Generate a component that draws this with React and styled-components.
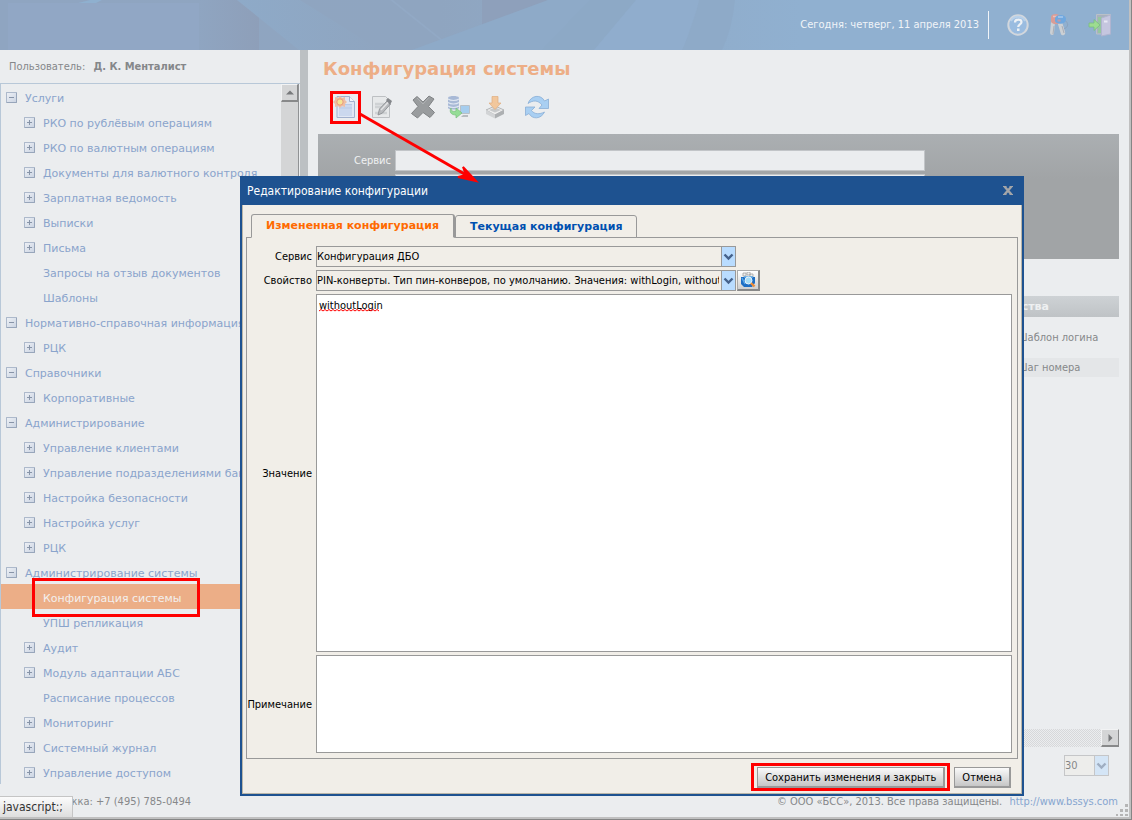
import React, { useState } from 'react';
import styled, { createGlobalStyle, css } from 'styled-components';

const GlobalStyle = createGlobalStyle`
    * {
        box-sizing: border-box;
    }

    html, body {
        margin: 0;
        padding: 0;
    }

    body, button, input, select, textarea {
        font-family: "DejaVu Sans Condensed", Tahoma, sans-serif;
        font-size: 11px;
    }

    svg {
        display: block;
    }
`;

const Page = styled.div`
    position: relative;
    display: flex;
    flex-direction: column;
    min-height: 100vh;
    padding: 0 2px 2px 0;
    background-color: #ebedef;
    border-right: 1px solid #858585;
    border-bottom: 1px solid #858585;
    box-shadow: inset -2px -2px 0 #c0c0c0;
    overflow: hidden;
`;

const Header = styled.header`
    position: relative;
    display: flex;
    align-items: center;
    justify-content: flex-end;
    height: 50px;
    padding-right: 17px;
    background-color: #90b0d0;
    color: #f1f4f8;
`;

const HeaderArt = styled.svg`
    position: absolute;
    top: 0;
    left: 0;
`;

const Today = styled.span`
    position: relative;
    padding-right: 9px;
    line-height: 28px;
    border-right: 1px solid #f1f4f8;
    margin-right: 17px;
`;

const HeaderLinks = styled.nav`
    display: flex;
    gap: 17px;
`;

const IconButton = styled.button`
    display: block;
    padding: 0;
    border: 0;
    background: none;
    cursor: pointer;
`;

const Body = styled.div`
    display: flex;
    flex: 1;
    min-height: 0;
`;

const Sidebar = styled.aside`
    display: flex;
    flex-direction: column;
    width: 300px;
    flex-shrink: 0;
`;

const User = styled.div`
    height: 33px;
    padding-left: 9px;
    line-height: 34px;
    color: #85878a;

    strong {
        margin-left: 5px;
    }
`;

const TreeArea = styled.div`
    display: flex;
    flex: 1;
    border-top: 1px solid #b8c8d8;
    border-left: 1px solid #b8c8d8;
`;

const Tree = styled.ul`
    flex: 1;
    min-width: 0;
    margin: 0;
    padding: 0;
    list-style: none;
    overflow: hidden;
`;

const TreeItem = styled.li`
    position: relative;
    display: flex;
    align-items: center;
    gap: 8px;
    height: 25px;
    padding-top: 2px;
    padding-left: ${({ $level }) => ($level ? 23 : 5)}px;
    background-color: ${({ $active }) => ($active ? '#ecae87' : 'transparent')};
`;

const TreeLink = styled.a`
    font-family: "DejaVu Sans", Verdana, sans-serif;
    line-height: 23px;
    white-space: nowrap;
    text-decoration: none;
    padding-top: 2px;
    color: ${({ $active }) => ($active ? '#f3f0ee' : '#8aa4cc')};
`;

const Toggle = styled.button`
    display: flex;
    align-items: center;
    justify-content: center;
    width: 11px;
    height: 11px;
    padding: 0;
    border: 1px solid #adb9cb;
    border-right-color: #97a5ba;
    border-bottom-color: #97a5ba;
    border-radius: 1px;
    background: linear-gradient(135deg, #edf0f5, #ccd5e3);
    visibility: ${({ $hidden }) => ($hidden ? 'hidden' : 'visible')};
`;

const Mark = styled.span`
    border: 3px solid #f00;
    position: absolute;
    z-index: 1;
    pointer-events: none;
`;

const TreeMark = styled(Mark)`
    top: -6px;
    bottom: -8px;
    left: 31px;
    width: 168px;
`;

const ScrollTrack = styled.div`
    width: 18px;
    border-right: 1px solid #909294;
    background-color: #d4d5d6;
    margin-right: 1px;
`;

const ScrollUp = styled.button`
    display: flex;
    align-items: center;
    justify-content: center;
    width: 17px;
    height: 18px;
    padding: 0;
    border: 1px solid #f2f3f4;
    border-right-color: #88898a;
    border-bottom: 2px solid #88898a;
    background-color: #d4d5d6;
`;

const Splitter = styled.div`
    width: 8px;
    flex-shrink: 0;
    background-color: #bcc0c3;
`;

const Main = styled.main`
    display: flex;
    flex: 1;
    flex-direction: column;
    min-width: 0;
    padding: 0 10px;
`;

const Title = styled.h1`
    margin: 0;
    padding: 6px 0 0 5px;
    font-family: "DejaVu Sans", Verdana, sans-serif;
    font-size: 18px;
    line-height: 25px;
    color: #edae86;
`;

const Toolbar = styled.div`
    display: flex;
    align-items: center;
    gap: 12px;
    height: 53px;
    padding: 0 0 2px 15px;
`;

const ToolButton = styled(IconButton)`
    position: relative;
    margin-right: ${({ $gap }) => ($gap ? 6 : 0)}px;
`;

const ToolMark = styled(Mark)`
    inset: -4px -4px -5px -3px;
`;

const Filter = styled.section`
    display: grid;
    grid-template-columns: 73px minmax(0, 530px);
    align-content: start;
    gap: 3px 4px;
    height: 125px;
    padding-top: 16px;
    background: linear-gradient(#abafb2, #a1a4a6 45px);
    color: #f0f1f2;
`;

const FilterLabel = styled.label`
    text-align: right;
    line-height: 21px;
`;

const FilterInput = styled.input`
    grid-column: 2;
    width: 100%;
    height: 21px;
    border: 1px solid #c2c5c8;
    background-color: #ebedef;
`;

const Grid = styled.div`
    display: flex;
    flex: 1;
    flex-direction: column;
    margin-top: 37px;
`;

const Table = styled.table`
    width: 100%;
    border-collapse: collapse;
    color: #86888a;

    th {
        height: 21px;
        padding: 0 70px 0 0;
        background: linear-gradient(#ced2d5, #bfc3c6);
        color: #eef0f1;
        font-family: "DejaVu Sans", Verdana, sans-serif;
        text-align: right;
    }

    td {
        padding: 0;
    }
`;

const Row = styled.tr`
    height: ${({ $shaded }) => ($shaded ? 19 : 41)}px;
    background-color: ${({ $shaded }) => ($shaded ? '#e4e6e8' : 'transparent')};
`;

const Cell = styled.span`
    display: block;
    width: 102px;
    margin-left: auto;
`;

const HorizontalScroll = styled.div`
    display: flex;
    justify-content: flex-end;
    height: 18px;
    margin-top: auto;
    background: repeating-conic-gradient(#d7d8da 0 25%, #ebedef 0 50%) 0 0 / 2px 2px;
`;

const ScrollRight = styled(ScrollUp)`
    width: 18px;
`;

const Pager = styled.div`
    display: flex;
    justify-content: flex-end;
    padding: 8px 10px;
`;

const Footer = styled.footer`
    display: flex;
    justify-content: space-between;
    height: 33px;
    padding: 0 11px 0 29px;
    line-height: 35px;
    color: #86888a;

    a {
        margin-left: 4px;
        text-decoration: none;
        color: #86a5d0;
    }
`;

const Status = styled.div`
    position: absolute;
    bottom: 2px;
    left: 0;
    width: 73px;
    height: 21px;
    padding-left: 3px;
    border-top: 1px solid #c5c5c5;
    border-right: 1px solid #c5c5c5;
    background: linear-gradient(#fcfcfc, #dedede);
    font-size: 12px;
    line-height: 21px;
    color: #333;
`;

const Grip = styled.svg`
    position: absolute;
    right: 3px;
    bottom: 3px;
`;

const Dialog = styled.section`
    position: absolute;
    top: 176px;
    right: 107px;
    bottom: 23px;
    left: 240px;
    display: flex;
    flex-direction: column;
    border: 2px solid #1e5290;
    background-color: #f1eee8;
`;

const DialogTitle = styled.header`
    display: flex;
    align-items: center;
    justify-content: space-between;
    height: 27px;
    padding: 0 9px 2px 5px;
    background-color: #1e5290;
    color: #fff;

    h2 {
        margin: 0;
        font-size: 12px;
        font-weight: normal;
    }
`;

const DialogBody = styled.div`
    display: flex;
    flex: 1;
    flex-direction: column;
    min-height: 0;
    padding: 9px 3px 5px;
    border: 1px solid #b9b5a8;
    border-top: 0;
`;

const Tabs = styled.div`
    display: flex;
    align-items: flex-end;
    height: 24px;
    margin: 0 0 -1px 5px;
`;

const Tab = styled.button`
    position: relative;
    height: ${({ $active }) => ($active ? 24 : 23)}px;
    padding: 0 14px;
    border: 1px solid #999;
    border-bottom-color: ${({ $active }) => ($active ? '#f1eee8' : '#999')};
    border-radius: 3px 3px 0 0;
    background-color: #f1eee8;
    font-family: "DejaVu Sans", Verdana, sans-serif;
    font-weight: bold;
    line-height: 20px;
    color: ${({ $active }) => ($active ? '#ff6a00' : '#0050b0')};
    ${({ $active }) => $active && css`
        border-right-width: 2px;
        z-index: 1;
    `}
`;

const Form = styled.form`
    display: grid;
    grid-template-columns: 65px minmax(0, 1fr);
    grid-template-rows: 21px 21px minmax(0, 1fr) 98px;
    gap: 3px 4px;
    flex: 1;
    min-height: 0;
    padding: 8px 5px 5px 0;
    border: 1px solid #999;

    label {
        align-self: center;
        text-align: right;
    }
`;

const Line = styled.div`
    display: flex;
    gap: 1px;
`;

const SelectBox = styled.div`
    position: relative;
    width: ${({ $small }) => ($small ? '45px' : '420px')};
    opacity: ${({ $small }) => ($small ? 0.45 : 1)};

    select {
        width: 100%;
        height: 21px;
        padding: 0 16px 0 0;
        appearance: none;
        border: 1px solid #999;
        border-radius: 0;
        background-color: #f1eee8;
        color: #000;
    }

    svg {
        position: absolute;
        top: 1px;
        right: 1px;
        pointer-events: none;
    }
`;

const Area = styled.textarea`
    display: block;
    width: 100%;
    height: 100%;
    padding: 4px 2px;
    border: 1px solid #999;
    border-radius: 0;
    outline: 0;
    resize: none;
    background-color: #fff;
    color: #000;
`;

const ValueBox = styled.div`
    position: relative;
`;

const Spelling = styled.svg`
    position: absolute;
    top: 15px;
    left: 3px;
`;

const Lookup = styled.button`
    display: flex;
    align-items: center;
    justify-content: center;
    width: 23px;
    height: 21px;
    padding: 0;
    border: 1px solid #aaa;
    border-right: 2px solid #888;
    border-bottom: 2px solid #888;
    background: linear-gradient(#fff, #cfcfcf);
`;

const Actions = styled.div`
    display: flex;
    justify-content: flex-end;
    gap: 9px;
    padding: 8px 7px 0 0;
`;

const ActionWrap = styled.div`
    position: relative;
`;

const ActionMark = styled(Mark)`
    inset: -4px -5px -3px -6px;
`;

const Action = styled.button`
    height: 21px;
    padding: 0 7px;
    border: 1px solid #999;
    border-right-width: 2px;
    border-bottom-width: 2px;
    background: linear-gradient(#fafafa, #c6c6c6);
    color: #000;
`;

const Arrow = styled.svg`
    position: absolute;
    top: 110px;
    left: 358px;
    pointer-events: none;
`;

const TREE = [
    ['Услуги', 0, '-'],
    ['РКО по рублёвым операциям', 1, '+'],
    ['РКО по валютным операциям', 1, '+'],
    ['Документы для валютного контроля', 1, '+'],
    ['Зарплатная ведомость', 1, '+'],
    ['Выписки', 1, '+'],
    ['Письма', 1, '+'],
    ['Запросы на отзыв документов', 1, ''],
    ['Шаблоны', 1, ''],
    ['Нормативно-справочная информация', 0, '-'],
    ['РЦК', 1, '+'],
    ['Справочники', 0, '-'],
    ['Корпоративные', 1, '+'],
    ['Администрирование', 0, '-'],
    ['Управление клиентами', 1, '+'],
    ['Управление подразделениями банка', 1, '+'],
    ['Настройка безопасности', 1, '+'],
    ['Настройка услуг', 1, '+'],
    ['РЦК', 1, '+'],
    ['Администрирование системы', 0, '-'],
    ['Конфигурация системы', 1, ''],
    ['УПШ репликация', 1, ''],
    ['Аудит', 1, '+'],
    ['Модуль адаптации АБС', 1, '+'],
    ['Расписание процессов', 1, ''],
    ['Мониторинг', 1, '+'],
    ['Системный журнал', 1, '+'],
    ['Управление доступом', 1, '+'],
];

const ACTIVE = 'Конфигурация системы';

const Chevron = () => (
    <svg width="14" height="19" viewBox="0 0 14 19">
        <rect width="14" height="19" fill="#b9dcff" />
        <path d="M0.5 0V19" stroke="#999" />
        <path d="M3.5 7.5L7.5 11.5L11.5 7.5" fill="none" stroke="#45628c" strokeWidth="2.4" />
    </svg>
);

const HelpIcon = () => (
    <svg width="24" height="24" viewBox="0 0 24 24">
        <circle cx="12" cy="12" r="9.7" fill="#9abce0" stroke="#d2d7dd" strokeWidth="2" />
        <path d="M5 8a8 8 0 0 1 14 0" fill="none" stroke="#b8d1ea" strokeWidth="2" />
        <path d="M9 9.5c0-4 6.500-3.500 6.500-.5 0 2.500-3.300 2.300-3.300 5" fill="none" stroke="#edf1f5" strokeWidth="2.200" />
        <rect x="11" y="15.500" width="2.500" height="2.500" fill="#edf1f5" />
    </svg>
);

const KeysIcon = () => (
    <svg width="24" height="24" viewBox="0 0 24 24">
        <path d="M17 7c5 2 5 8-1 9" fill="none" stroke="#8ba3bf" strokeWidth="1" />
        <path d="M6 9L5 20" stroke="#ccd0d4" strokeWidth="4" strokeLinecap="round" />
        <path d="M13 10L16 20" stroke="#ccd0d4" strokeWidth="4.500" strokeLinecap="round" />
        <path d="M7 13l-1 8M15 13l2 7" stroke="#a9adb6" />
        <path d="M4 4c0-4 9-4 9 0v5c0 3-9 3-9-1z" fill="#d99c96" />
        <path d="M6 3.500h4" stroke="#ecc0b8" strokeWidth="1.500" />
        <path d="M8 5c1-4 11-4 11 1 0 6-10 6-11 2z" fill="#70a8df" />
        <path d="M11 4h5" stroke="#a9caee" strokeWidth="1.500" />
        <path d="M10.500 7.500h3" stroke="#c59aa6" strokeWidth="2" />
    </svg>
);

const ExitIcon = () => (
    <svg width="24" height="24" viewBox="0 0 24 24">
        <path d="M8.500 1.500H22.500V21H8.500z" fill="#a7b1bd" stroke="#b9c0c8" />
        <path d="M10 4h5v16h-5z" fill="#96c6a0" />
        <path d="M13.500 5L22.500 2V21L13.500 23z" fill="#c5c6df" stroke="#b0b4d0" />
        <path d="M16 8.500h3.500" stroke="#e8e8f4" strokeWidth="2" />
        <path d="M1 10h5V6.500l6 5.500-6 5.500V14H1z" fill="#9ddc90" stroke="#78bd80" strokeWidth=".8" />
    </svg>
);

const NewIcon = () => (
    <svg width="24" height="24" viewBox="0 0 24 24">
        <path d="M4 1.500h12.500l5 5V22.500H4z" fill="#e0e7f4" stroke="#a2b1ce" />
        <path d="M16.500 1.500v5h5" fill="#f4f7fb" stroke="#a2b1ce" />
        <path d="M6 9h13v12H6z" fill="#cbd8ee" />
        <path d="M6 9.500h13M6 13h13" stroke="#b9c9e6" />
        <path d="M7 1l2 2 3-1v3l2 2-2 2v3l-3-1-2 2-2-2-3 1V9L0 7l2-2V2l3 1z" fill="#eebfa4" />
        <circle cx="7" cy="7" r="3.200" fill="#f6e493" stroke="#e99882" />
    </svg>
);

const EditIcon = () => (
    <svg width="24" height="24" viewBox="0 0 24 24">
        <path d="M3.500 1.500h13l4 4V22.500h-17z" fill="#e7e9ea" stroke="#bdc0c3" />
        <path d="M6 9h9M6 12h7M6 18h12" stroke="#cfd2d4" strokeWidth="2.500" />
        <path d="M9 20l1.500-6L18 6l3.500 3-8 9z" fill="#b8babd" stroke="#94979a" />
        <path d="M17 5l2-2 4 3-2 4z" fill="#84878b" />
        <path d="M12 15l7-7.500" stroke="#e3e4e5" strokeWidth="1.500" />
    </svg>
);

const DeleteIcon = () => (
    <svg width="24" height="24" viewBox="0 0 24 24">
        <path d="M6 1.500L12 7L18 1L23 4L17.500 11.500L23.500 17.500L19 22.500L12 17.500L6.500 23L0.500 18.500L7 11.500L2 5z" fill="#999c9e" stroke="#808385" strokeLinejoin="round" />
        <path d="M6 3l6 6 6-6.500" fill="none" stroke="#aeb1b3" />
    </svg>
);

const ServerIcon = () => (
    <svg width="24" height="24" viewBox="0 0 24 24">
        <path d="M1 2.500c1-2 10-2 11 0V13c-1 2-10 2-11 0z" fill="#a8b9d6" />
        <path d="M1 4c3 2 8 2 11 0M1 7.500c3 2 8 2 11 0M1 11c3 2 8 2 11 0" fill="none" stroke="#e0e7f2" strokeWidth="1.200" />
        <path d="M13.500 10.500h9v8h-9z" fill="#a5cdee" stroke="#b8c0c7" />
        <path d="M16 20h5v2h-7z" fill="#b7bbbf" />
        <path d="M4 13c0 3 2 4 5 3v-3l6 5-6 5v-3c-5 0-7-3-5-7z" fill="#95dd96" stroke="#79bd7d" strokeWidth=".7" />
    </svg>
);

const DownloadIcon = () => (
    <svg width="24" height="24" viewBox="0 0 24 24">
        <path d="M3 15L12 11L21 15L12 20z" fill="#ededed" stroke="#b4b7b9" />
        <path d="M3 15L12 19.500V23.500L3 19z" fill="#d2d4d6" />
        <path d="M21 15L12 19.500V23.500L21 19z" fill="#adb0b2" />
        <path d="M6 15l6-2.500L18 15l-6 2.500z" fill="#c7c9ca" />
        <path d="M9 1.500h6V8h3L12 14.500L6 8h3z" fill="#f2c79c" stroke="#dfae80" strokeWidth=".7" />
    </svg>
);

const RefreshIcon = () => (
    <svg width="24" height="24" viewBox="0 0 24 24">
        <path d="M3 8.500C6 0 16-1 19.500 6l4-2v9.500H14l3-3.500C13 5 8 5 3 8.500z" fill="#a9cff2" stroke="#8aaed5" strokeWidth=".8" />
        <path d="M19.500 17C16 24.500 7 24.500 4 18.500l-3.500 2V12H10l-3.500 3.500c3 4 8 4 13 1.500z" fill="#a9cff2" stroke="#8aaed5" strokeWidth=".8" />
    </svg>
);

const LookupIcon = () => (
    <svg width="16" height="16" viewBox="0 0 16 16">
        <path d="M1 5h14v6l-3 4H4l-3-3z" fill="#1d6ec4" />
        <path d="M3 1h3v3H3zM7 0h3v3H7zM10 2h3v3h-3z" fill="#eee" stroke="#999" strokeWidth=".7" />
        <path d="M2 6l3 6M4 5h9" stroke="#58a7e8" strokeWidth="1.500" />
        <circle cx="8.500" cy="8.500" r="3.500" fill="#a5dcf6" stroke="#edf6fc" />
        <path d="M11 11l3.500 3.500" stroke="#ef8c35" strokeWidth="2.400" />
    </svg>
);

const Tools = [
    { name: 'Создать', icon: <NewIcon />, marked: true },
    { name: 'Изменить', icon: <EditIcon />, gap: true },
    { name: 'Удалить', icon: <DeleteIcon /> },
    { name: 'Синхронизация', icon: <ServerIcon /> },
    { name: 'Загрузить', icon: <DownloadIcon />, gap: true },
    { name: 'Обновить', icon: <RefreshIcon /> },
];

const Navigation = () => (
    <Sidebar>
        <User>Пользователь: <strong>Д. К. Менталист</strong></User>
        <TreeArea>
            <Tree>
                {TREE.map(([text, level, sign], i) => (
                    <TreeItem key={i} $level={level} $active={text === ACTIVE}>
                        <Toggle $hidden={!sign} aria-label={text}>
                            <svg width="5" height="5" viewBox="0 0 5 5">
                                <path d={sign === '+' ? 'M0 2.5H5M2.5 0V5' : 'M0 2.5H5'} stroke="#8794a8" />
                            </svg>
                        </Toggle>
                        <TreeLink href="#" $active={text === ACTIVE}>{text}</TreeLink>
                        {text === ACTIVE && <TreeMark />}
                    </TreeItem>
                ))}
            </Tree>
            <ScrollTrack>
                <ScrollUp aria-label="Вверх">
                    <svg width="8" height="5" viewBox="0 0 8 5"><path d="M0 4.5L4 0.5L8 4.5z" fill="#77797b" /></svg>
                </ScrollUp>
            </ScrollTrack>
        </TreeArea>
    </Sidebar>
);

const EditDialog = () => {
    const [tab, setTab] = useState(0);

    return (
        <Dialog role="dialog" aria-labelledby="dialog-title">
            <DialogTitle>
                <h2 id="dialog-title">Редактирование конфигурации</h2>
                <IconButton aria-label="Закрыть">
                    <svg width="10" height="9" viewBox="0 0 10 9">
                        <path d="M1.500 .5L8.500 8.500M8.500 .5L1.500 8.500" stroke="#a3a5a8" strokeWidth="2.400" />
                        <path d="M0 .5h3.500M6.500 .5H10M0 8.500h3.500M6.500 8.500H10" stroke="#a3a5a8" />
                    </svg>
                </IconButton>
            </DialogTitle>
            <DialogBody>
                <Tabs role="tablist">
                    <Tab role="tab" $active={tab === 0} onClick={() => setTab(0)}>Измененная конфигурация</Tab>
                    <Tab role="tab" $active={tab === 1} onClick={() => setTab(1)}>Текущая конфигурация</Tab>
                </Tabs>
                <Form>
                    <label htmlFor="service">Сервис</label>
                    <Line>
                        <SelectBox>
                            <select id="service"><option>Конфигурация ДБО</option></select>
                            <Chevron />
                        </SelectBox>
                    </Line>
                    <label htmlFor="property">Свойство</label>
                    <Line>
                        <SelectBox>
                            <select id="property">
                                <option>PIN-конверты. Тип пин-конверов, по умолчанию. Значения: withLogin, withoutLogin</option>
                            </select>
                            <Chevron />
                        </SelectBox>
                        <Lookup type="button" aria-label="Выбрать"><LookupIcon /></Lookup>
                    </Line>
                    <label htmlFor="value">Значение</label>
                    <ValueBox>
                        <Area id="value" defaultValue="withoutLogin" spellCheck={false} />
                        <Spelling width="62" height="3" viewBox="0 0 62 3">
                            <path d={'M0 2' + 'l2-1.500l2 1.500'.repeat(15)} fill="none" stroke="#f00" />
                        </Spelling>
                    </ValueBox>
                    <label htmlFor="note">Примечание</label>
                    <Area id="note" />
                </Form>
                <Actions>
                    <ActionWrap>
                        <Action>Сохранить изменения и закрыть</Action>
                        <ActionMark />
                    </ActionWrap>
                    <Action>Отмена</Action>
                </Actions>
            </DialogBody>
        </Dialog>
    );
};

const App = () => {
    return (
        <Page>
            <GlobalStyle />
            <Header>
                <HeaderArt width="800" height="50" viewBox="0 0 800 50">
                    <defs>
                        <linearGradient id="sky">
                            <stop offset="0" stopColor="#8fa5c1" />
                            <stop offset=".55" stopColor="#8fa5c0" />
                            <stop offset="1" stopColor="#90b0d0" />
                        </linearGradient>
                        <linearGradient id="shade">
                            <stop offset="0" stopColor="#8fa5c1" />
                            <stop offset="1" stopColor="#8e9fb9" />
                        </linearGradient>
                        <linearGradient id="beam">
                            <stop offset="0" stopColor="#8eaac8" />
                            <stop offset="1" stopColor="#8fa5c0" />
                        </linearGradient>
                    </defs>
                    <rect width="800" height="50" fill="url(#sky)" />
                    <path d="M199 0H259V50H199z" fill="url(#shade)" />
                    <path d="M8 3H199V50H8z" fill="#91a7c5" />
                    <path d="M78 3L90 0H102L96 3z" fill="#8fb0cf" />
                    <path d="M237 0H300L380 50H299z" fill="url(#beam)" />
                    <path d="M390 0h3l60 48h-3z" fill="#92a9c5" />
                    <path d="M482 0H548L482 36z" fill="#8ea0bb" />
                    <path d="M548 0H700V50H412z" fill="#8eaac8" />
                    <path d="M590 0H636L594 50H542z" fill="#8da9c6" />
                    <path d="M636 0H700L683 50H594z" fill="#90adcd" />
                    <path d="M699 0H735Q732 30 722 50H682Q696 24 699 0z" fill="#8eaac8" />
                </HeaderArt>
                <Today>Сегодня: четверг, 11 апреля 2013</Today>
                <HeaderLinks>
                    <IconButton aria-label="Справка"><HelpIcon /></IconButton>
                    <IconButton aria-label="Ключи"><KeysIcon /></IconButton>
                    <IconButton aria-label="Выход"><ExitIcon /></IconButton>
                </HeaderLinks>
            </Header>
            <Body>
                <Navigation />
                <Splitter />
                <Main>
                    <Title>Конфигурация системы</Title>
                    <Toolbar>
                        {Tools.map(({ name, icon, gap, marked }) => (
                            <ToolButton key={name} aria-label={name} $gap={gap}>
                                {icon}
                                {marked && <ToolMark />}
                            </ToolButton>
                        ))}
                    </Toolbar>
                    <Filter>
                        <FilterLabel htmlFor="filter-service">Сервис</FilterLabel>
                        <FilterInput id="filter-service" />
                        <FilterInput aria-label="Свойство" />
                    </Filter>
                    <Grid>
                        <Table>
                            <thead>
                                <tr><th>Свойства</th></tr>
                            </thead>
                            <tbody>
                                <Row><td><Cell>Шаблон логина</Cell></td></Row>
                                <Row $shaded><td><Cell>Шаг номера</Cell></td></Row>
                            </tbody>
                        </Table>
                        <HorizontalScroll>
                            <ScrollRight aria-label="Вправо">
                                <svg width="5" height="8" viewBox="0 0 5 8"><path d="M0.5 0L4.5 4L0.5 8z" fill="#77797b" /></svg>
                            </ScrollRight>
                        </HorizontalScroll>
                    </Grid>
                    <Pager>
                        <SelectBox $small>
                            <select aria-label="Записей на странице"><option>30</option></select>
                            <Chevron />
                        </SelectBox>
                    </Pager>
                </Main>
            </Body>
            <Footer>
                <span>Поддержка: +7 (495) 785-0494</span>
                <span>© ООО «БСС», 2013. Все права защищены. <a href="#">http://www.bssys.com</a></span>
            </Footer>
            <Status>javascript:;</Status>
            <Grip width="12" height="12" viewBox="0 0 12 12">
                <path d="M9 0h3v3h-3zM9 5h3v3h-3zM4 5h3v3h-3zM9 10h3v2h-3zM4 10h3v2h-3zM0 10h2v2h-2z" fill="#b5b5b5" />
            </Grip>
            <EditDialog />
            <Arrow width="122" height="76" viewBox="0 0 122 76">
                <path d="M2 4L110 66" stroke="#f00" strokeWidth="3" />
                <path d="M118 71L105 57L108 65L100 67z" fill="#f00" stroke="#f00" strokeWidth="2" />
            </Arrow>
        </Page>
    );
};

export default App;
